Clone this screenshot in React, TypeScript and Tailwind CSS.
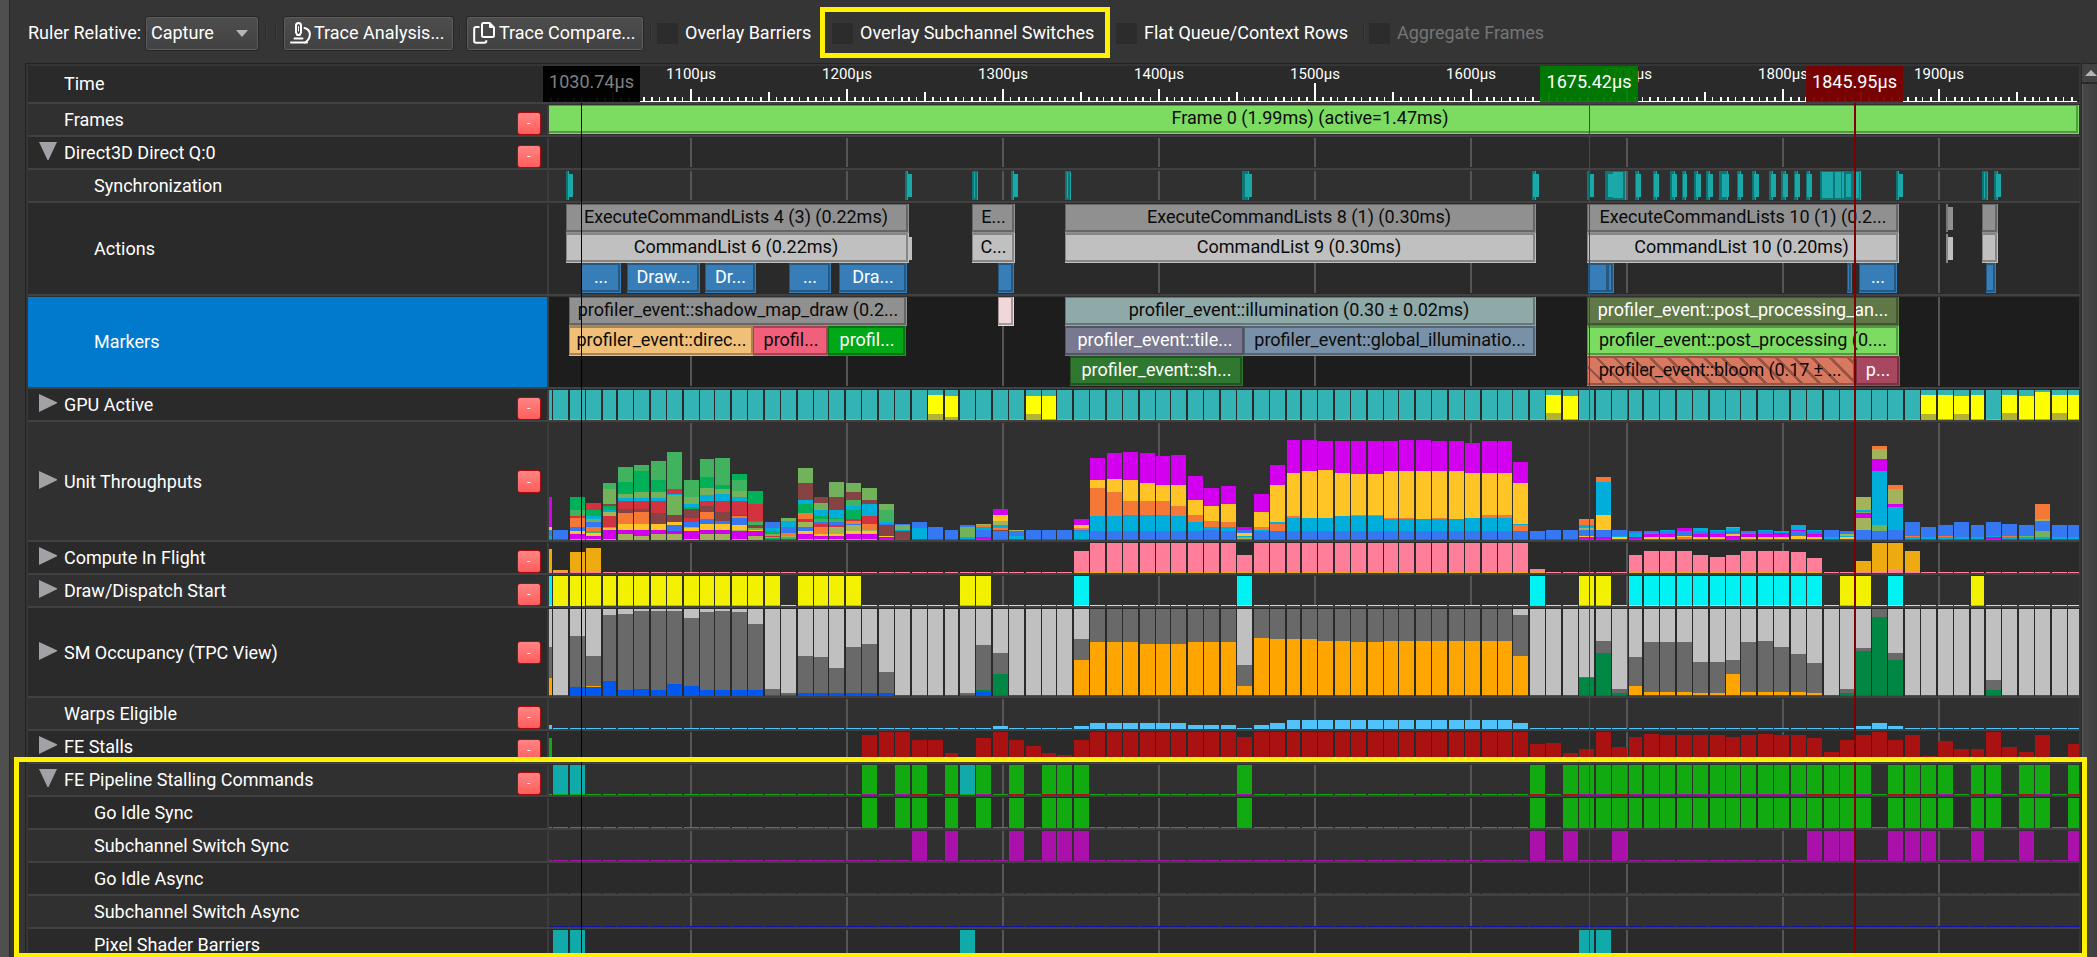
import React from "react";

const X0 = 549;
const X1 = 2079;

/* Left edges and widths of the 95 sampling columns. */
const WIDTHS: Record<number, number> = { 0: 3, 94: 11 };
const STARTS = [
  549, 553, 570, 586, 603, 618, 634, 651, 667, 684, 700, 715, 732, 748, 765, 781, 798, 814, 829, 846, 862, 879, 895,
  912, 928, 945, 960, 976, 993, 1009, 1026, 1042, 1057, 1074, 1090, 1107, 1123, 1140, 1156, 1171, 1188, 1204, 1221,
  1237, 1254, 1270, 1287, 1302, 1318, 1335, 1351, 1368, 1384, 1399, 1416, 1432, 1449, 1465, 1482, 1498, 1513, 1530,
  1546, 1563, 1579, 1596, 1612, 1629, 1644, 1660, 1677, 1693, 1710, 1726, 1741, 1758, 1774, 1791, 1807, 1824, 1840,
  1856, 1872, 1888, 1905, 1921, 1938, 1954, 1971, 1986, 2002, 2019, 2035, 2052, 2068,
];
const colWidth = (i: number) => {
  if (WIDTHS[i]) return WIDTHS[i];
  const pitch = STARTS[i + 1] - STARTS[i];
  if (pitch === 17) return 15;
  if (pitch === 16) return 15;
  return [4, 25, 46, 67, 88].includes(i) ? 13 : 14;
};

const GRID = [690, 846, 1002, 1158, 1314, 1470, 1626, 1782, 1938];

type Palette = Record<string, string>;

const UNIT: Palette = {
  G: "#00b159", g: "#41b25d", o: "#71b25a", O: "#a3b35c", r: "#d2333f", b: "#874244",
  n: "#f57837", y: "#ffc526", m: "#d200ee", B: "#3677f2", c: "#00aedb",
};
const GPU: Palette = { T: "#33b3b3", Y: "#ffff00", O: "#b2b233" };
const COMPUTE: Palette = { P: "#ff7f9a", A: "#edaa11" };
const DRAW: Palette = { Y: "#f2f200", C: "#00f2f2" };
const SM: Palette = { L: "#c0c0c0", D: "#696969", A: "#ffa500", B: "#0058ee", G: "#008744" };
const FE: Palette = { G: "#11aa11", T: "#11aaaa", M: "#aa11aa", R: "#aa1111", B: "#1111aa", W: "#4fc3fa" };

/* "from-to:120A140B" stacks colour A from level 120 and colour B from level 140, three levels per pixel. */
const UNIT_DATA = `0:351m441y450B468c477r 1:450B477m 2:351G390g408r414n441B453y462m477O 3:369r390G408c417o426B441n453g459y468m477O
4:309g327o372b378G390c396O408r441n444y450m477O 5:261g306G342o354c363r387b399n432y450m462O 6:255g273G336o354c363r387b396n432y450m468O
7:243g300G336o354c363r399b432y450m462O 8:216g327r342c345o405b426y435B453m462O 9:300g351o372c381G387b414r426B441O444y453m477O
10:237g291G324o345c363r378b396n417B432y450m462O 11:234g315G327o342c363r396b423B432y450m462O 12:282G300g333o351c363r405b408n414B435y450O453m477O
13:333G372r423B426g435b444o450y453m468O 14:426B444c453G462o468r471o474G477m 15:414o423c441B459n468O471g477m
16:264o309b360c372G399n417r426O441B453y462m477O 17:351b369o390c408G417g426B432r441n462y468m477O 18:306o351b390c414G417g426B435r441O462y468m477O
19:309o336b360g378c390G417r423n432B435O453y462m477O 20:324o360b372c408r432n450O453y462m477O 21:372o390g426c432B435b468y471m477r
22:432B435o450c453b477m 23:426B444c477m 24:441B477m 25:450B477m 26:435B441o471c477m 27:432O435n441c450B471m477r
28:387m405y423O435c444n450b453B477r 29:450O453B468c477m 30-32:450B477m 33:417m435y444n450B453c477r 34:234m300y324n408c453B477r
35:219m297y336n408c453B477r 36:216m300y363n405c453B477r 37:219m309y363n405c453B477r 38:228m315y363n405c453B477r 39:225m315y378n408c453B477r
40:288m360y405n426c453B477r 41:324m378y423n441c450B477r 42:318m372y426n441c453B477r 43:441m450B459y468c471n474O477r
44:342m396y441n450c453B477r 45:255m315y426c432n453B477r 46:180m279y408n414c453B477r 47:180m273y414c453B477r 48:183m270y414c453B477r
49:183m279y408c453B477r 50-51:183m282y405n408c453B477r 52:183m273y414n417c453B477r 53:180m273y414n417c453B477r 54:180m273y417c453B477r
55:183m273y414n417c453B477r 56:183m273y417c453B477r 57:189m279y414c453B477r 58-59:183m279y405n414c453B477r 60:246m309y432c435n453B477r
61:453B477m 62-63:450B477m 64:417n435c444O450B468y471m477r 65:291n306c405y450B471m477r 66:450B468c471y477m 67:453B459c471m477r
68:453B459c462m471y477r 69:450c453B462m471y477r 70:444m453B468y471n477r 71:444c453B462m471y477r 72:450c453B462m471y477r
73:441n444c453B462y468m477r 74:453B459c462m471y477r 75:450c453B462m471y477r 76:453c459m471y477r 77:435c450m453B468y477m
78:450c453B462m471y477r 79:450B471c477m 80:453B462O468c471y477m 81:351O390c396o399m414O450B477r 82:198n207O237m273c435o453B477r
83:315n327O372m381c450B477r 84:426B468n471c477m 85:441B471c477m 86:435B468n471c477m 87:426B471c477m 88:435B471c477m
89:426B468c471m477r 90:432B468n471c477m 91:435B468o471c477m 92:372n417O423B453o471c477m 93-94:435B471c477m`;

const GPU_DATA = `0-23:30T117O 24:30T45Y102O 25:30T48Y111O 26-29:30T117O 30:30T48Y102O 31:30T48Y117O 32-61:30T117O 62:30T45Y99O 63:30T48Y117O
64-84:30T117O 85:30T45Y102O 86:30T45Y117O 87:30T48Y102O 88:30T45Y117O 89:30T117O 90:30T45Y99O 91:30T48Y117O 92:30T36Y117O 93:30T45Y99O 94:30T45Y117O`;

const COMPUTE_DATA = `0:507A576P 1:570A576P 2:516A576P 3:504A576P 4-32:576P 33:513P576A 34-42:489P576A 43:525P576A 44-60:489P576A 61:567P576A
62-66:576P 67:525P576A 68-70:513P576A 71:525P576A 72:531P576A 73:525P576A 74-76:513P576A 77:516P576A 78:534P576A 79-80:576P 81:543A576P
82:489A576P 83:489A570P 84:513A576P 85-94:576P`;

const DRAW_DATA = `0:588C675Y 1-2:588Y 3-14:588Y675C 15:675Y 16-19:588Y675C 20-25:675Y 26-27:588Y675C 28-32:675Y 33:588C675Y 34-42:675Y
43:588C675Y 44-60:675Y 61:588C 62-63:675Y 64-65:588Y675C 66:675Y 67-78:588C675Y 79:675Y 80:588Y675C 81:588Y 82:675Y 83:588C675Y 84-87:675Y 88:588Y675C 89-94:675Y`;

const SM_DATA = `0:687L801D894A945B 1:687L945B 2:687L768D921B 3:687L828D918A921B 4:687L705D903B 5:687L702D930B 6:687L693D927B 7:687L693D930B
8:687L693D912B 9:687L714D918B 10:687L696D930B 11:687L693D930B 12:687L696D930B 13:687L732D930B 14:687L927D945B 15:687L939D945B 16:687L828D939B
17:687L831D939B 18:687L864D939B 19:687L801D939B 20:687L792D939B 21:687L876D939B 22-25:687L945B 26:687L939D945B 27:687L795D930G936B
28:687L819D882G945B 29-32:687L945B 33:687L777D840A945B 34-36:687D786A945B 37-39:687D792A945B 40-42:687D786A945B 43:687L855D918A945B
44:687D774A945B 45-47:687D777A945B 48-49:687D783A945B 50-51:687D786A945B 52-59:687D783A945B 60:687L705D828A945B 61-63:687L945B
64:687L891D894G945B 65:687L783D819G945B 66:687L927D939G945B 67:687L831D918A945B 68-70:687L786D936A945B 71-72:687L846D939A945B
73:687L840D882A945B 74:687L786D936A945B 75:687L783D936A945B 76:687L801D936A945B 77:687L822D936A945B 78:687L849D939A945B 79:687L945B
80:687L927D939G945B 81:687L804D813G945B 82:687D711G945B 83:687L819D840G945B 84-88:687L945B 89:687L900D930G945B 90-94:687L945B`;

const WARPS_DATA = `0:105W 1-27:114W 28:108W 29-32:114W 33:108W 34-39:99W 40-42:105W 43:114W 44:105W 45:99W 46-59:90W 60:99W 61-80:114W 81:108W 82:99W 83:108W 84-94:114W`;

const STALLS_DATA = `0:144G 20:135R 21-22:126R 23-24:150R 25:189R 27:144R 28:126R 29:150R 30:168R 31:189R 32:195R 33:150R 34-42:126R 43:141R 44-60:126R
61:162R 62:159R 63:189R 64:177R 65:126R 66:171R 67:141R 68:132R 69-72:135R 73:141R 74:135R 75:132R 76-77:135R 78:144R 79:186R 80:150R 81:135R
82:126R 83:150R 84:135R 85:198R 86:153R 87-88:177R 89:126R 90:171R 91:186R 92:135R 94:162R`;

const PIPE_DATA = `0-94:312G 1-2:225T312G 20:225G312M 22:225G312M 23:225G312R 25:225G312R 26:225T312G 27:225G312M 29:225G312R 31-33:225G312R
43:225G312M 61:225G312R 63:225G312R 64-65:225G312M 66:225G312R 67-77:225G312M 78-80:225G312R 81:225G312M 83-85:225G312R 86:225G312M
88:225G312R 89:225G312M 91:225G312R 92:225G312M 94:225G312R`;
const IDLE_DATA = `0-94:87G 20:0G 22-23:0G 25:0G 27:0G 29:0G 31-33:0G 43:0G 61:0G 63-81:0G 83-86:0G 88-89:0G 91-92:0G 94:0G`;
const SUBCH_DATA = `0-94:87M 23:0M 25:0M 29:0M 31-33:0M 61:0M 63:0M 66:0M 78-80:0M 83-85:0M 88:0M 91:0M 94:0M`;

function Grid({ h }: { h: number }) {
  return (
    <>
      {GRID.map((x) => (
        <rect key={x} x={x} y={0} width={2} height={h - 1} fill="#555555" />
      ))}
    </>
  );
}

function Chart({ h, data, origin, palette, grid = true }: { h: number; data?: string; origin?: number; palette?: Palette; grid?: boolean }) {
  const bars: React.ReactNode[] = [];
  if (data && palette) {
    data.split(/\s+/).forEach((entry) => {
      const [range, stack] = entry.split(":");
      const [a, b] = range.split("-").map(Number);
      const segs = [...stack.matchAll(/(\d+)([A-Za-z])/g)];
      for (let i = a; i <= (b ?? a); i++) {
        segs.forEach((s, k) => {
          const y = (Number(s[1]) - (origin ?? 0)) / 3;
          const end = k + 1 < segs.length ? (Number(segs[k + 1][1]) - (origin ?? 0)) / 3 : h;
          bars.push(<rect key={`${entry}${i}-${k}`} x={STARTS[i]} y={y} width={colWidth(i)} height={end - y} fill={palette[s[2]]} />);
        });
      }
    });
  }
  return (
    <svg className="block" width={X1 - X0} height={h} viewBox={`${X0} 0 ${X1 - X0} ${h}`} shapeRendering="crispEdges">
      {grid && <Grid h={h} />}
      {bars}
    </svg>
  );
}

type Ev = { x: number; x2: number; row: number; bg: string; edge: string; text?: string; fg?: string; hatch?: boolean };

const BLK = "#0a0a0a";
const WHT = "#ffffff";
const gray = { bg: "#909090", edge: "#666666" };
const light = { bg: "#c0c0c0", edge: "#868686" };
const blue = { bg: "#377eb8", edge: "#265880", fg: WHT };

const ACTIONS: Ev[] = [
  { x: 566, x2: 909, row: 0, ...gray, text: "ExecuteCommandLists 4 (3) (0.22ms)" },
  { x: 566, x2: 909, row: 1, ...light, text: "CommandList 6 (0.22ms)" },
  { x: 581, x2: 621, row: 2, ...blue, text: "..." },
  { x: 627, x2: 700, row: 2, ...blue, text: "Draw..." },
  { x: 705, x2: 756, row: 2, ...blue, text: "Dr..." },
  { x: 789, x2: 831, row: 2, ...blue, text: "..." },
  { x: 839, x2: 907, row: 2, ...blue, text: "Dra..." },
  { x: 972, x2: 1015, row: 0, ...gray, text: "E..." },
  { x: 972, x2: 1015, row: 1, ...light, text: "C..." },
  { x: 998, x2: 1014, row: 2, ...blue },
  { x: 1065, x2: 1536, row: 0, ...gray, text: "ExecuteCommandLists 8 (1) (0.30ms)" },
  { x: 1065, x2: 1536, row: 1, ...light, text: "CommandList 9 (0.30ms)" },
  { x: 1587, x2: 1899, row: 0, ...gray, text: "ExecuteCommandLists 10 (1) (0.2..." },
  { x: 1587, x2: 1899, row: 1, ...light, text: "CommandList 10 (0.20ms)" },
  { x: 1588, x2: 1609, row: 2, ...blue },
  { x: 1608, x2: 1614, row: 2, ...blue },
  { x: 1847, x2: 1852, row: 2, ...blue },
  { x: 1859, x2: 1897, row: 2, ...blue, text: "..." },
  { x: 1982, x2: 1998, row: 0, ...gray },
  { x: 1982, x2: 1998, row: 1, ...light },
  { x: 1986, x2: 1996, row: 2, ...blue },
];

const MARKERS: Ev[] = [
  { x: 569, x2: 907, row: 0, ...gray, text: "profiler_event::shadow_map_draw (0.2..." },
  { x: 569, x2: 754, row: 1, bg: "#f0bf78", edge: "#a88553", text: "profiler_event::direc..." },
  { x: 753, x2: 829, row: 1, bg: "#f15f7a", edge: "#a84255", text: "profil..." },
  { x: 828, x2: 906, row: 1, bg: "#00a817", edge: "#007510", text: "profil...", fg: WHT },
  { x: 998, x2: 1014, row: 0, bg: "#f0d8da", edge: "#a89798" },
  { x: 1065, x2: 1536, row: 0, bg: "#8fa8a8", edge: "#647676", text: "profiler_event::illumination (0.30 ± 0.02ms)" },
  { x: 1065, x2: 1245, row: 1, bg: "#787890", edge: "#545465", text: "profiler_event::tile...", fg: WHT },
  { x: 1244, x2: 1536, row: 1, bg: "#7890a8", edge: "#546576", text: "profiler_event::global_illuminatio..." },
  { x: 1070, x2: 1243, row: 2, bg: "#307830", edge: "#1f5420", text: "profiler_event::sh...", fg: WHT },
  { x: 1587, x2: 1899, row: 0, bg: "#607848", edge: "#435432", text: "profiler_event::post_processing_an...", fg: WHT },
  { x: 1587, x2: 1899, row: 1, bg: "#7cdc62", edge: "#559944", text: "profiler_event::post_processing (0...." },
  { x: 1587, x2: 1856, row: 2, bg: "#d87860", edge: "#975443", text: "profiler_event::bloom (0.17 ± ...", hatch: true },
  { x: 1856, x2: 1900, row: 2, bg: "#a84860", edge: "#763243", text: "p...", fg: WHT },
];

function EventBox({ e }: { e: Ev }) {
  const top = [0, 29, 59][e.row];
  const h = e.row === 0 ? 29 : 30;
  const complete = !e.text?.endsWith("...");
  return (
    <div className="absolute" style={{ left: e.x - X0, top, width: e.x2 - e.x, height: h, background: e.bg }}>
      <div
        className={`border-2 border-l-[1px] ${e.row === 0 ? "border-t-[1px]" : ""}`}
        style={{
          width: e.x2 - e.x - 1,
          height: h - 1,
          borderColor: e.edge,
          backgroundImage: e.hatch
            ? "repeating-linear-gradient(45deg, transparent 0 10px, #975443 10px 12.7px)"
            : undefined,
        }}
      />
      {e.text && (
        <div
          className={`absolute inset-x-0 text-center text-[18px] leading-[30px] whitespace-pre ${e.row === 0 ? "-top-[2px]" : "-top-px"} ${complete ? "pr-[3px]" : ""} ${e.hatch ? "pr-[3px] tracking-[-0.12px]" : ""}`}
          style={{ color: e.fg ?? BLK }}
        >
          {e.text}
        </div>
      )}
    </div>
  );
}

function Events({ items, children }: { items: Ev[]; children?: React.ReactNode }) {
  return (
    <div className="relative h-[90px]">
      <Chart h={90} />
      {items.map((e, i) => (
        <EventBox key={i} e={e} />
      ))}
      {children}
    </div>
  );
}

/* [start, width of the dark back edge, start of the bright part, end] */
const SYNC: number[][] = [
  [566, 3, 568, 573], [905, 3, 907, 912], [1011, 3, 1013, 1018], [1242, 7, 1245, 1252], [1532, 4, 1533, 1539],
  [1587, 3, 1589, 1594], [1635, 4, 1636, 1641], [1653, 4, 1654, 1659], [1670, 5, 1672, 1677], [1682, 4, 1683, 1687],
  [1694, 4, 1696, 1701], [1706, 4, 1708, 1713], [1719, 9, 1722, 1729], [1737, 4, 1738, 1743], [1752, 4, 1754, 1759],
  [1769, 4, 1771, 1776], [1781, 5, 1783, 1788], [1794, 4, 1795, 1800], [1806, 4, 1807, 1812], [1896, 3, 1898, 1903],
  [1994, 4, 1996, 2001],
];
const THIN = [972, 1065, 1982];

function SyncTrack() {
  const D = "#0f7474";
  const L = "#1aa8a8";
  return (
    <svg className="block" width={X1 - X0} height={30} viewBox={`${X0} 0 ${X1 - X0} 30`} shapeRendering="crispEdges">
      <Grid h={30} />
      {SYNC.map(([x, w, lx, end]) => (
        <g key={x}>
          <rect x={x} y={0} width={w} height={29} fill={D} />
          <rect x={x + w - 1} y={0} width={1} height={29} fill={L} />
          <rect x={lx} y={3} width={end - lx} height={23} fill={L} />
        </g>
      ))}
      {THIN.map((x) => (
        <g key={x}>
          <rect x={x} y={0} width={6} height={29} fill={D} />
          <rect x={x + 2} y={1} width={1} height={26} fill={L} />
          <rect x={x + 5} y={1} width={1} height={28} fill={L} />
        </g>
      ))}
      <rect x={1605} y={0} width={21} height={29} fill={D} />
      <rect x={1608} y={3} width={15} height={23} fill={L} />
      <rect x={1613} y={1} width={10} height={26} fill={L} />
      <rect x={1625} y={0} width={1} height={29} fill={L} />
      <rect x={1820} y={0} width={31} height={29} fill={D} />
      <rect x={1822} y={1} width={11} height={26} fill={L} />
      <rect x={1835} y={1} width={6} height={26} fill={L} />
      <rect x={1842} y={1} width={2} height={26} fill={L} />
      <rect x={1846} y={3} width={5} height={23} fill={L} />
      <rect x={1851} y={0} width={10} height={29} fill={D} />
      <rect x={1855} y={1} width={4} height={26} fill={L} />
      <rect x={1860} y={0} width={1} height={29} fill={L} />
    </svg>
  );
}

function Ruler() {
  const ticks: React.ReactNode[] = [];
  for (let t = 1010; t < 1990; t += 5) {
    const x = Math.round(690 + (t - 1100) * 1.56);
    const y = t === 1500 ? 17 : t % 100 === 0 ? 23 : t % 50 === 0 ? 26 : 31;
    ticks.push(<rect key={t} x={x} y={y} width={t % 50 === 0 || t % 3 ? 2 : 1} height={36 - y} fill="#fff" />);
  }
  return (
    <svg className="block" width={X1 - X0} height={36} viewBox={`${X0} 0 ${X1 - X0} 36`} shapeRendering="crispEdges">
      {ticks}
      <rect x={X0} y={35} width={1528} height={1} fill="#fff" />
      {GRID.map((x, i) => (
        <text key={x} x={x + 1} y={13} fill="#fff" fontSize={15} textAnchor="middle">
          {`${1100 + i * 100}µs`}
        </text>
      ))}
    </svg>
  );
}

function Triangle({ open }: { open: boolean }) {
  return (
    <svg className="relative -top-[2px] block" width={18} height={18} viewBox="0 0 18 18">
      <path d={open ? "M0 0H18L9.5 18H8.5Z" : "M0 0L18 8.2V9.2L0 18Z"} fill="#a1a1a6" />
    </svg>
  );
}

type RowProps = {
  label: string;
  h: number;
  level?: number;
  tri?: "open" | "closed";
  remove?: boolean;
  dark?: boolean;
  selected?: boolean;
  children?: React.ReactNode;
};

function Row({ label, h, level = 0, tri, remove, dark, selected, children }: RowProps) {
  const shade = dark ? "bg-[#2a2a2a]" : "bg-[#303030]";
  return (
    <div className="flex shrink-0 flex-col">
      <div className="h-[2px] bg-[#414141]" />
      <div className={`h-px ${shade}`} />
      <div className="flex" style={{ height: h }}>
        <div
          className={`flex w-[519px] items-center pr-[6px] ${selected ? "bg-[#007acc]" : shade}`}
        >
          <div className="flex w-[36px] shrink-0 justify-start pl-[11px]">{tri && <Triangle open={tri === "open"} />}</div>
          <div className={`flex-1 text-[18px] leading-[30px] whitespace-pre text-white ${level ? "pl-[30px]" : ""}`}>{label}</div>
          {remove && (
            <div
              className={`relative flex h-[23px] w-[24px] items-center justify-center rounded-[3px] border-[1.5px] border-[#a80c0c] bg-linear-to-b from-[#ff8484] to-[#ff5c5c] text-[12px] text-white ${h === 30 ? "top-[3px]" : ""}`}
            >
              -
            </div>
          )}
        </div>
        <div className="w-[2px] bg-[#3c3c3c]" />
        <div className={`w-[1530px] ${selected ? "bg-[#1d1d1d]" : shade}`}>{children}</div>
      </div>
    </div>
  );
}

function CheckItem({ label, disabled }: { label: string; disabled?: boolean }) {
  return (
    <div className="flex items-center gap-[7px]">
      <div className="h-[21px] w-[21px] bg-[#2c2c2c]" />
      <span className={`whitespace-pre ${disabled ? "text-[#757575]" : "text-white"}`}>{label}</span>
    </div>
  );
}

function Sep() {
  return <div className="h-[18px] w-[2px] border-r border-[#3c3c3c] bg-[#2c2c2c]" />;
}

const BTN =
  "flex h-[35px] items-center rounded-[3px] border border-[#262626] bg-linear-to-b from-[#4e4e4e] to-[#414141] shadow-[inset_0_0_0_1px_#5c5c5c]";

function Toolbar() {
  return (
    <div className="flex h-[63px] items-start text-[18px] leading-[34px] text-white">
      <div className="flex h-[66px] items-center pl-[18px]">
        <div className="w-[117px] whitespace-pre">Ruler Relative:</div>
        <div className={`${BTN} w-[114px] justify-between pr-[10px] pl-[5px]`}>
          <span>Capture</span>
          <svg width={12} height={7} viewBox="0 0 12 7">
            <path d="M0 0H12L6 7Z" fill="#b5b5b5" />
          </svg>
        </div>
        <div className="flex w-[24px] items-center gap-[8px] pl-[6px]">
          <Sep />
          <Sep />
        </div>
        <div className={`${BTN} w-[171px] gap-[4px] pl-[6px]`}>
          <svg className="-mr-px" width={21} height={22} viewBox="0 0 21 22" fill="none" stroke="#fff" strokeWidth={2} strokeLinecap="round">
            <path d="M1 20.500H17M4.500 16.500H12.500" />
            <path d="M8.500 1C10.300 1 11 2 11 3.500V10.500L9.700 13H7.300L6 10.500V3.500C6 2 6.700 1 8.500 1Z" />
            <path d="M8.500 4.500V9" strokeWidth={1} />
            <path d="M14.500 6C18.500 7 20 10 19.800 13C19.500 16.500 17.500 19 15 20.500" />
          </svg>
          <span className="whitespace-pre">Trace Analysis...</span>
        </div>
        <div className="flex w-[12px] items-center pl-[5px]">
          <Sep />
        </div>
        <div className={`${BTN} w-[178px] gap-[4px] pl-[6px]`}>
          <svg className="-mr-px" width={23} height={22} viewBox="0 0 23 22" fill="none" stroke="#fff" strokeWidth={2} strokeLinejoin="round">
            <path d="M10.500 1H16.500L21 5.500V13.500Q21 15 19.500 15H10.500Q9 15 9 13.500V2.500Q9 1 10.500 1Z" />
            <path d="M16.500 1V5.500H21Z" fill="#fff" strokeWidth={1} />
            <path d="M6.500 5H3Q1.200 5 1.200 6.800V19Q1.200 20.800 3 20.800H11.500Q13.300 20.800 13.300 19V18.300" />
          </svg>
          <span className="whitespace-pre">Trace Compare...</span>
        </div>
        <div className="flex w-[13px] items-center pl-[6px]">
          <Sep />
        </div>
        <div className="w-[175px]"><CheckItem label="Overlay Barriers" /></div>
        <div className="w-[284px]"><CheckItem label="Overlay Subchannel Switches" /></div>
        <div className="w-[247px]"><CheckItem label="Flat Queue/Context Rows" /></div>
        <div className="w-[6px]"><Sep /></div>
        <CheckItem label="Aggregate Frames" disabled />
      </div>
    </div>
  );
}

export default function App() {
  return (
    <div className="relative flex h-[957px] w-[2097px] overflow-hidden bg-[#353535] font-['Roboto','Liberation_Sans',sans-serif]">
      <div className="w-[9px] shrink-0 bg-[#4f4f4f]" />
      <div className="w-px shrink-0 bg-[#262626]" />
      <div className="flex flex-1 flex-col">
        <Toolbar />
        <div className="flex flex-1">
          <div className="ml-[15px] flex w-[2055px] shrink-0 flex-col border-t border-l border-[#222222] pl-[2px]">
            <div className="mt-[2px] flex h-[36px] shrink-0">
              <div className="flex w-[519px] items-center bg-[#2a2a2a] pb-[2px] pl-[36px] text-[18px] text-white">Time</div>
              <div className="w-[2px] bg-[#3c3c3c]" />
              <div className="w-[1530px] bg-[#2a2a2a]"><Ruler /></div>
            </div>
            <Row label="Frames" h={30} remove>
              <div className="h-[29px] w-[1530px] bg-[#7cdc62]">
                <div className="h-[28px] w-[1529px] border-t border-r-2 border-b-2 border-[#559944] pr-[5px] text-center text-[18px] leading-[24px] text-[#0a0a0a]">
                  Frame 0 (1.99ms) (active=1.47ms)
                </div>
              </div>
            </Row>
            <Row label="Direct3D Direct Q:0" h={30} tri="open" remove dark><Chart h={30} /></Row>
            <Row label="Synchronization" h={30} level={1}><SyncTrack /></Row>
            <Row label="Actions" h={90} level={1} dark>
              <Events items={ACTIONS}>
                <div className="absolute top-[33px] left-[359px] h-[23px] w-[4px] bg-[#c0c0c0]" />
                <div className="absolute top-0 left-[1397px] h-[28px] w-[2px] bg-[#777777]" />
                <div className="absolute top-[3px] left-[1399px] h-[23px] w-[5px] bg-[#909090]" />
                <div className="absolute top-[30px] left-[1397px] h-[29px] w-[2px] bg-[#868686]" />
                <div className="absolute top-[33px] left-[1399px] h-[23px] w-[5px] bg-[#c0c0c0]" />
              </Events>
            </Row>
            <Row label="Markers" h={90} level={1} selected><Events items={MARKERS} /></Row>
            <Row label="GPU Active" h={30} tri="closed" remove dark>
              <Chart h={30} data={GPU_DATA} origin={30} palette={GPU} />
            </Row>
            <Row label="Unit Throughputs" h={117} tri="closed" remove>
              <Chart h={117} data={UNIT_DATA} origin={129} palette={UNIT} />
            </Row>
            <Row label="Compute In Flight" h={30} tri="closed" remove dark>
              <Chart h={30} data={COMPUTE_DATA} origin={489} palette={COMPUTE} />
            </Row>
            <Row label="Draw/Dispatch Start" h={30} tri="closed" remove>
              <Chart h={30} data={DRAW_DATA} origin={588} palette={DRAW} />
            </Row>
            <Row label="SM Occupancy (TPC View)" h={87} tri="closed" remove dark>
              <Chart h={87} data={SM_DATA} origin={687} palette={SM} />
            </Row>
            <Row label="Warps Eligible" h={30} remove>
              <Chart h={30} data={WARPS_DATA} origin={27} palette={FE} />
            </Row>
            <Row label="FE Stalls" h={30} tri="closed" remove dark>
              <Chart h={30} data={STALLS_DATA} origin={126} palette={FE} />
            </Row>
            <Row label="FE Pipeline Stalling Commands" h={30} tri="open" remove>
              <Chart h={30} data={PIPE_DATA} origin={225} palette={FE} />
            </Row>
            <Row label="Go Idle Sync" h={30} level={1} dark><Chart h={30} data={IDLE_DATA} palette={FE} /></Row>
            <Row label="Subchannel Switch Sync" h={30} level={1}><Chart h={30} data={SUBCH_DATA} palette={FE} /></Row>
            <Row label="Go Idle Async" h={30} level={1} dark><Chart h={30} data="0-94:87R" palette={FE} /></Row>
            <Row label="Subchannel Switch Async" h={30} level={1}><Chart h={30} data="0-94:87B" palette={FE} /></Row>
            <Row label="Pixel Shader Barriers" h={30} level={1} dark>
              <Chart h={30} data="1-2:0T 26:0T 64-65:0T" palette={FE} />
            </Row>
          </div>
          <div className="ml-px flex w-[16px] flex-col border-t border-l border-[#262626] bg-linear-to-r from-[#494949] to-[#3e3e3e]">
            <div className="flex h-[20px] items-center justify-center border-b-2 border-[#2a2a2a] bg-[#424242] pl-[3px]">
              <svg width={12} height={6} viewBox="0 0 12 6">
                <path d="M0 6L6 0L12 6Z" fill="#b5b5b5" />
              </svg>
            </div>
            <div className="flex-1 border-l border-[#5c5c5c]" />
          </div>
        </div>
      </div>

      {/* Time cursors */}
      <div className="absolute top-[103px] left-[581px] h-[854px] w-px bg-black" />
      <div className="absolute top-[103px] left-[1589px] h-[854px] w-px bg-[#007a00]" />
      <div className="absolute top-[103px] left-[1854px] h-[854px] w-[2px] bg-[#800000]" />
      <div className="absolute top-[66px] left-[543px] h-[36px] w-[97px] bg-black/95 text-center text-[18px] leading-[31px] text-[#808080]">1030.74µs</div>
      <div className="absolute top-[66px] left-[1540px] h-[36px] w-[98px] bg-[#007a00]/95 text-center text-[18px] leading-[31px] text-white">1675.42µs</div>
      <div className="absolute top-[66px] left-[1806px] h-[36px] w-[97px] bg-[#7b0000]/95 text-center text-[18px] leading-[31px] text-white">1845.95µs</div>

      {/* Highlight frames */}
      <div className="absolute top-[7px] left-[820px] h-[51px] w-[290px] border-[5px] border-[#fff200]" />
      <div className="absolute top-[757px] left-[14px] h-[200px] w-[2073px] border-[5px] border-b-4 border-[#fff200]" />
    </div>
  );
}
